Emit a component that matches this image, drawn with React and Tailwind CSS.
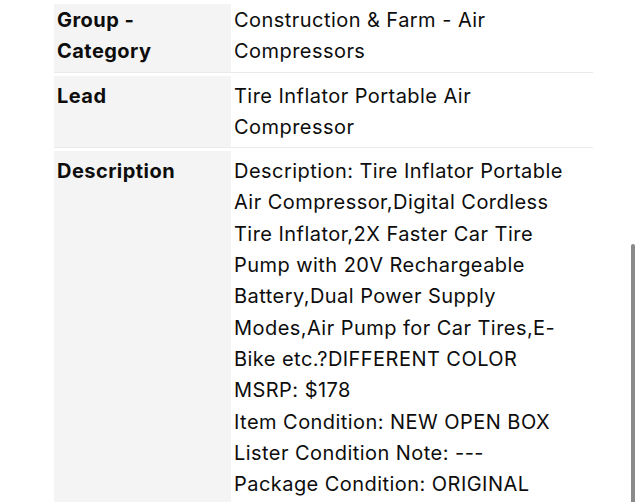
export default function App() {
  const rows = [
    { label: "Group - Category", value: ["Construction & Farm - Air Compressors"], pt: "pt-[1px]" },
    { label: "Lead", value: ["Tire Inflator Portable Air Compressor"], pt: "pt-[5px]" },
    {
      label: "Description",
      value: [
        "Description: Tire Inflator Portable Air Compressor,Digital Cordless Tire Inflator,2X Faster Car Tire Pump with 20V Rechargeable Battery,Dual Power Supply Modes,Air Pump for Car Tires,E-Bike etc.?DIFFERENT COLOR",
        "MSRP: $178",
        "Item Condition: NEW OPEN BOX",
        "Lister Condition Note: ---",
        "Package Condition: ORIGINAL",
      ],
      pt: "pt-[5px]",
    },
  ];
  return (
    <div className="relative w-[640px] h-[502px] overflow-hidden bg-white text-[20px] leading-[31.3px] tracking-[0.45px] text-[#0d0d0d]" style={{ fontFamily: "Inter, 'Liberation Sans', sans-serif" }}>
      <div className="ml-[54px] mt-[4px] w-[539px] flex flex-col gap-[3px]">
        {rows.map((r, i) => (
          <div key={i} className="flex border-b border-[#ebebeb]">
            <div className={`w-[177px] shrink-0 bg-[#f4f4f4] pl-[3px] pr-[8px] ${r.pt} pb-[4px] font-bold`}>{r.label}</div>
            <div className={`flex-1 pl-[3px] ${r.pt} pb-[4px] pr-[26px]`}>
              {r.value.map((v, j) => (
                <div key={j}>{v}</div>
              ))}
            </div>
          </div>
        ))}
      </div>
      <div className="absolute left-[631px] top-[244px] w-[4px] h-[270px] rounded-full bg-[#8a8a8a]" />
    </div>
  );
}
